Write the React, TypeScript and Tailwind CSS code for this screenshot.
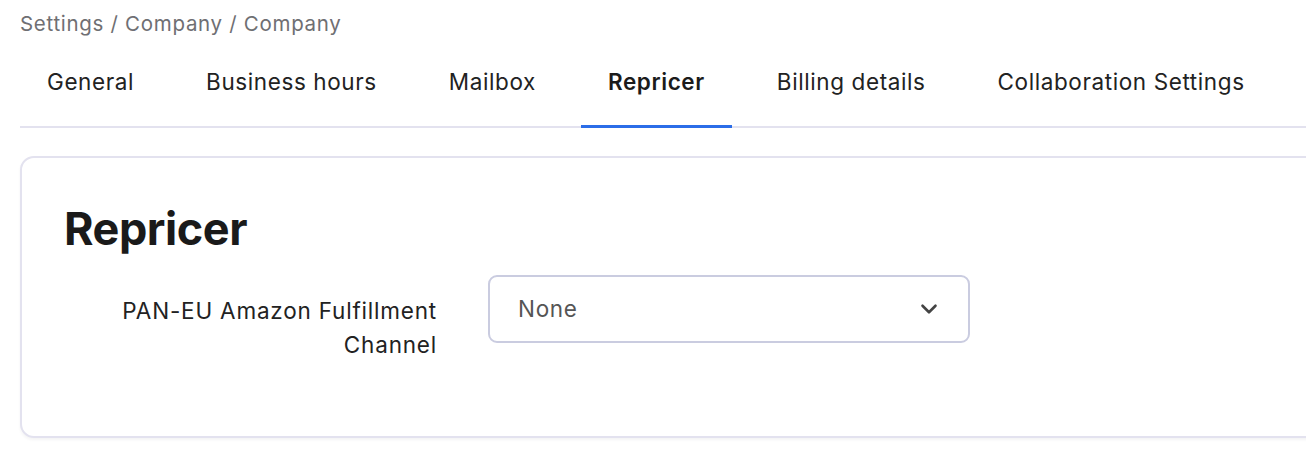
import { ChevronDown } from "lucide-react";

const tabs = [
  "General",
  "Business hours",
  "Mailbox",
  "Repricer",
  "Billing details",
  "Collaboration Settings",
];

export default function App() {
  const active = "Repricer";

  return (
    <div className="h-[468px] w-full overflow-hidden bg-white font-['Inter',sans-serif] text-[#1f1f1f] antialiased">
      <div className="w-[1330px] pl-[20px] pt-[11px]">
        <p className="text-[20.5px] leading-[26px] tracking-[0.7px] text-[#6f6f73]">Settings / Company / Company</p>

        <nav className="mt-[1px] flex gap-[18px] border-b-2 border-[#e3e2ef]">
          {tabs.map((tab) => {
            const isActive = tab === active;
            return (
              <button
                key={tab}
                type="button"
                className={
                  isActive
                    ? "-mb-[2px] border-b-[3px] border-[#2b6de8] px-[27px] pt-[30px] pb-[29px] text-[22.5px] leading-[28px] font-semibold tracking-[0.6px] text-[#1b1b1b]"
                    : "px-[27px] pt-[30px] pb-[30px] text-[22.5px] leading-[28px] tracking-[0.6px] text-[#222]"
                }
              >
                {tab}
              </button>
            );
          })}
        </nav>

        <section className="mt-[28px] rounded-[14px] border-2 border-[#e3e2ef] bg-white px-[42px] pt-[43px] pb-[74px] shadow-[0_2px_3px_rgba(30,30,60,0.05)]">
          <h1 className="text-[45px] leading-[55px] font-bold tracking-[-0.01em] text-[#1a1a1a]">Repricer</h1>

          <div className="mt-[19px] flex items-start gap-[51px]">
            <label className="w-[373px] pt-[19px] text-right text-[22.5px] leading-[34px] tracking-[0.8px] text-[#222]">
              PAN-EU Amazon Fulfillment Channel
            </label>
            <div className="flex h-[68px] w-[482px] items-center justify-between rounded-[9px] border-2 border-[#cacce0] bg-white pl-[28px] pr-[26px]">
              <span className="text-[22.5px] leading-[28px] tracking-[0.7px] text-[#555]">None</span>
              <ChevronDown size={26} strokeWidth={2.4} className="text-[#444]" />
            </div>
          </div>
        </section>
      </div>
    </div>
  );
}
